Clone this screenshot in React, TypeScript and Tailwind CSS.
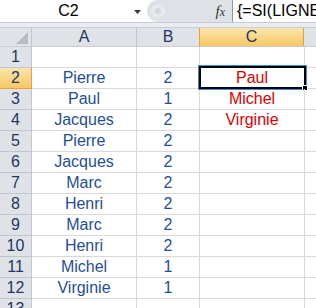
const rows: [string, string, string][] = [
  ["", "", ""],
  ["Pierre", "2", "Paul"],
  ["Paul", "1", "Michel"],
  ["Jacques", "2", "Virginie"],
  ["Pierre", "2", ""],
  ["Jacques", "2", ""],
  ["Marc", "2", ""],
  ["Henri", "2", ""],
  ["Marc", "2", ""],
  ["Henri", "2", ""],
  ["Michel", "1", ""],
  ["Virginie", "1", ""],
  ["", "", ""],
]

const FormulaBar = () => {
  return (
    <div className="flex h-[22px] bg-white">
      <div className="flex w-[147px] items-center">
        <div className="flex-1 text-center pl-1 leading-none">C2</div>
        <svg width="9" height="6" viewBox="0 0 9 6" className="mr-[5px] mt-[2px]">
          <path d="M1 1 L8 1 L4.5 5 Z" fill="#3a3a3a" />
        </svg>
      </div>
      <div className="flex w-[85px] items-center rounded-l-[11px] bg-[#dee2e7]">
        <div className="ml-[4px] h-[14px] w-[14px] rounded-full bg-[#e6e9ed] flex items-center justify-center">
          <div className="h-[6px] w-[6px] rounded-full bg-[#d3d7dc]" />
        </div>
        <div className="flex-1" />
        <span className="mr-[7px] font-['Liberation_Serif',serif] italic text-[15px] leading-none text-[#333]">
          f<span className="text-[12px]">x</span>
        </span>
      </div>
      <div className="flex-1 overflow-hidden whitespace-nowrap border-l border-[#8e98a4] pl-[4px] leading-[22px]">
        {"{=SI(LIGNE()-1>NB(A2:A12);\"\";...)}"}
      </div>
    </div>
  )
}

const HeaderRow = () => {
  return (
    <div className="flex h-[20px] border-y border-[#c8cdd4] bg-[#dfe3e8] text-[#233660]">
      <div className="relative w-[32px] border-r border-[#c0c6ce]">
        <svg width="12" height="12" viewBox="0 0 12 12" className="absolute left-[16px] top-[4px]">
          <path d="M12 0 L12 12 L0 12 Z" fill="#b6bcc3" />
        </svg>
      </div>
      <div className="flex w-[105px] items-center justify-center border-r border-[#c0c6ce] leading-none">A</div>
      <div className="flex w-[63px] items-center justify-center border-r border-[#c0c6ce] leading-none">B</div>
      <div className="flex w-[105px] items-center justify-center border-x border-[#f29d3c] -ml-px bg-gradient-to-b from-[#fbe5ad] to-[#f6c860] leading-none">
        C
      </div>
      <div className="flex-1" />
    </div>
  )
}

export default function App() {
  return (
    <div className="h-[308px] w-[316px] overflow-hidden bg-white font-['Liberation_Sans',Arial,sans-serif] text-[16px] text-black">
      <FormulaBar />
      <div className="h-[5px] border-t border-[#c6ccd4] bg-[#e9ecf0]" />
      <HeaderRow />
      {rows.map((r, i) => {
        const n = i + 1
        const sel = n === 2
        return (
          <div key={n} className="flex h-[21px] leading-[20px]">
            <div
              className={
                sel
                  ? "w-[32px] border-b border-r border-[#f29d3c] bg-gradient-to-b from-[#fbe5ad] to-[#f6c860] text-center text-[#233660]"
                  : "w-[32px] border-b border-r border-[#c0c6ce] bg-[#dfe3e8] text-center text-[#233660]"
              }
            >
              {n}
            </div>
            <div className="w-[105px] border-b border-r border-[#d9d9d9] text-center text-[#1f4f97]">{r[0]}</div>
            <div className="w-[63px] border-b border-r border-[#d9d9d9] text-center text-[#1f4f97]">{r[1]}</div>
            <div className="relative w-[105px] border-b border-r border-[#d9d9d9] text-center text-[#e00000]">
              {r[2]}
              {sel && (
                <div className="absolute -left-[1px] -top-[2px] -right-[2px] -bottom-[1px] border-2 border-black outline outline-1 outline-[#3b8ee0]">
                  <div className="absolute -right-[4px] -bottom-[4px] h-[6px] w-[6px] bg-black border border-white" />
                </div>
              )}
            </div>
            <div className="flex-1 border-b border-[#d9d9d9]" />
          </div>
        )
      })}
    </div>
  )
}
